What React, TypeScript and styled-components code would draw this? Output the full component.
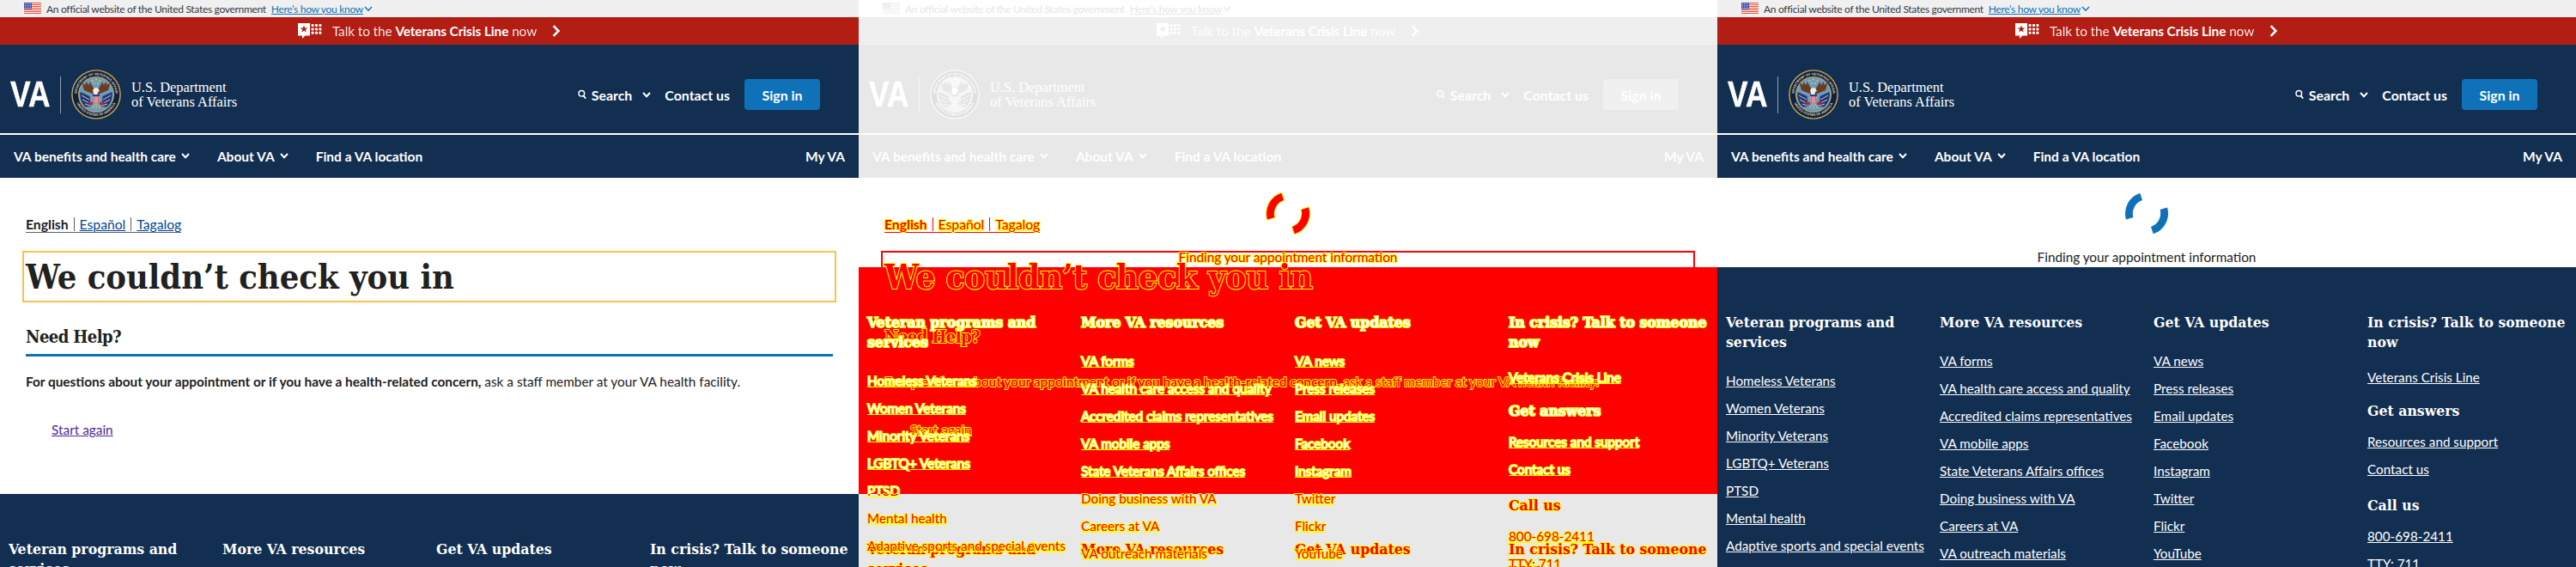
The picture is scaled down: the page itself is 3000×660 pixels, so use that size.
import React from "react";
import styled, { createGlobalStyle, css } from "styled-components";

const sans = `"Lato", "Open Sans", sans-serif`;
const slab = `"DejaVu Serif Condensed", "DejaVu Serif", serif`;

const GlobalStyle = createGlobalStyle`
  html, body { margin: 0; padding: 0; background: #fff; }
  #root { width: 3000px; height: 660px; overflow: hidden; }
  * { box-sizing: border-box; }
`;

const Page = styled.div`
  display: flex;
  width: 3000px;
  height: 660px;
  font-family: ${sans};
`;

const liveTone = css`
  --gov-bg: #f0f0f0;
  --gov-ink: #323a45;
  --gov-link: #0f72b9;
  --crisis-bg: #b21d14;
  --navy: #122f51;
  --button: #0f72b9;
  --art-filter: none;
  --ink: #212121;
  --link: #004795;
  --visited: #4c2c92;
  --rule: #0f72b9;
  --focus: #f9c24a;
  --lang-rule: #5b616b;
  --sep: #5b616b;
  --footer-bg: #122f51;
  --footer-ink: #fff;
  --spin: #0f72b9;
  --spin-edge: transparent;
`;

const diffTone = css`
  --gov-bg: #fff;
  --gov-ink: #e6e6e6;
  --gov-link: #e6e6e6;
  --crisis-bg: #efefef;
  --navy: #e8e8e8;
  --button: #f0f0f0;
  --art-filter: grayscale(1) contrast(0.1) brightness(1.9);
`;

const Panel = styled.section<{ $diff?: boolean }>`
  display: flex;
  flex-direction: column;
  width: 1000px;
  height: 660px;
  overflow: hidden;
  ${(p) => (p.$diff ? diffTone : liveTone)}
`;

/* gov banner */
const GovBanner = styled.div`
  display: flex;
  align-items: center;
  flex: none;
  height: 20px;
  padding-left: 28px;
  background: var(--gov-bg);
  color: var(--gov-ink);
  font-size: 12px;
  letter-spacing: -0.31px;
`;
const GovText = styled.span`
  margin-left: 6px;
`;
const GovLink = styled.a`
  margin: 0 1px 0 6px;
  color: var(--gov-link);
  text-decoration: underline;
`;

/* crisis line */
const CrisisBar = styled.div`
  display: flex;
  align-items: center;
  justify-content: center;
  flex: none;
  height: 32px;
  gap: 12px;
  background: var(--crisis-bg);
  color: #fff;
  font-size: 15.4px;
`;
const CrisisText = styled.span`
  margin-right: 6px;
  letter-spacing: -0.1px;
  b { font-weight: 700; }
  span { opacity: 0.88; }
`;

/* masthead */
const Masthead = styled.header`
  display: flex;
  align-items: center;
  flex: none;
  height: 103px;
  padding: 13px 45px 0 12px;
  background: var(--navy);
  color: #fff;
`;
const VaMark = styled.span`
  display: block;
  flex: none;
  width: 47px;
  font: 700 42px/1 "Liberation Sans", sans-serif;
  -webkit-text-stroke: 0.5px #fff;
  transform: scaleX(0.84);
  transform-origin: left center;
`;
const LogoRule = styled.span`
  width: 1px;
  height: 43px;
  margin: 0 12px 0 11px;
  background: rgba(255, 255, 255, 0.55);
`;
const SealWrap = styled.span`
  display: flex;
  filter: var(--art-filter);
`;
const DeptName = styled.div`
  margin-left: 12px;
  font: 400 16.4px/17.5px "Liberation Serif", serif;
`;
const Actions = styled.div`
  display: flex;
  align-items: center;
  margin-left: auto;
  font-size: 15.9px;
  font-weight: 700;
`;
const SearchLabel = styled.span`
  margin: 0 12px 0 6px;
`;
const ContactLabel = styled.span`
  margin: 0 17px 0 16px;
`;
const SignIn = styled.span`
  display: flex;
  align-items: center;
  justify-content: center;
  width: 88px;
  height: 36px;
  border-radius: 4px;
  background: var(--button);
`;
const HeaderLine = styled.div`
  flex: none;
  height: 1.5px;
  background: #fff;
`;

/* nav */
const Nav = styled.nav`
  display: flex;
  align-items: center;
  flex: none;
  height: 50.5px;
  padding: 0 16px;
  background: var(--navy);
  color: #fff;
  font-size: 15.5px;
  font-weight: 700;
`;
const NavItem = styled.span`
  display: flex;
  align-items: center;
  gap: 6px;
  margin-right: 32px;
`;
const MyVa = styled.span`
  margin-left: auto;
`;

/* page body */
const ErrorMain = styled.main`
  flex: none;
  height: 368px;
  padding: 44px 30px 0;
  color: var(--ink);
  font-size: 15.36px;
  line-height: 24px;
`;
const LangRow = styled.div`
  display: flex;
  align-items: center;
  width: fit-content;
  height: 20px;
  gap: 6px;
  border-bottom: 1px solid var(--lang-rule);
  font-size: 15.7px;
  line-height: 18px;
  b { font-weight: 700; }
`;
const LangSep = styled.span`
  width: 1px;
  height: 16px;
  background: var(--sep);
`;
const LangLink = styled.a`
  color: var(--link);
  text-decoration: underline;
`;
const Title = styled.h1`
  height: 60px;
  margin: 21px -4px 0;
  padding-left: 2px;
  border: 2px solid var(--focus);
  font: 700 39.5px/57px ${slab};
`;
const HelpTitle = styled.h2`
  margin: 28px 0 0;
  padding-bottom: 8px;
  border-bottom: 3px solid var(--rule);
  font: 700 20px/24px ${slab};
  letter-spacing: -0.56px;
`;
const HelpText = styled.p`
  margin: 17px 0 0;
  b { font-weight: 700; }
`;
const StartAgain = styled.a`
  display: block;
  margin: 32px 0 0 30px;
  color: var(--visited);
  text-decoration: underline;
`;

const LoadingMain = styled.main`
  display: flex;
  flex-direction: column;
  align-items: center;
  flex: none;
  height: 104px;
  padding-top: 16px;
  color: var(--ink);
  font-size: 15.3px;
  line-height: 24px;
`;
const LoadingText = styled.p`
  margin: 13px 0 0;
`;

/* footer */
const Footer = styled.footer`
  display: grid;
  grid-template-columns: repeat(4, 249px);
  flex: none;
  height: 349px;
  padding: 53px 0 0 10px;
  background: var(--footer-bg);
  color: var(--footer-ink);
`;
const ColTitle = styled.h3`
  width: 232px;
  margin: 0 0 21px;
  font: 700 17.5px/23px ${slab};
`;
const CrisisTitle = styled(ColTitle)`
  margin-bottom: 17px;
`;
const SubTitle = styled(ColTitle)<{ $top: number }>`
  margin: ${(p) => p.$top}px 0 12px;
`;
const LinkList = styled.ul`
  display: flex;
  flex-direction: column;
  gap: 8px;
  margin: 0;
  padding: 0;
  list-style: none;
  font-size: 15.25px;
  line-height: 24px;
`;
const FooterLink = styled.a`
  color: inherit;
  text-decoration: underline;
`;

/* diff panel overlay */
const DiffStage = styled.div`
  position: relative;
  flex: 1;
  min-height: 0;
  background: linear-gradient(#fff 104px, #f00 104px, #f00 368px, #e8e8e8 368px);
`;
const DiffInk = css`
  --ink: #f00;
  --link: #f00;
  --visited: #f00;
  --rule: #f00;
  --focus: #f00;
  --lang-rule: #f00;
  --sep: #f00;
  --footer-bg: transparent;
  --footer-ink: #f00;
  --spin: #f00;
  --spin-edge: #ff0;
  -webkit-text-stroke: 2px #ff0;
  paint-order: stroke fill;
`;
const BeforeLayer = styled.div`
  ${DiffInk}
  display: flex;
  flex-direction: column;
`;
const AfterLayer = styled.div`
  ${DiffInk}
  position: absolute;
  inset: 0;
  display: flex;
  flex-direction: column;
`;
const FooterWindow = styled.div<{ $height: number; $ink: string }>`
  flex: none;
  height: ${(p) => p.$height}px;
  overflow: hidden;
  --footer-ink: ${(p) => p.$ink};
`;
const FooterShift = styled.div`
  margin-top: -264px;
`;

/* drawings */
const Chevron = ({ color = "currentColor", sw = 2 }: { color?: string; sw?: number }) => (
  <svg width="10" height="7" viewBox="0 0 10 7" fill="none">
    <path d="M1 1l4 4.2L9 1" stroke={color} strokeWidth={sw} />
  </svg>
);

const Flag = () => (
  <svg width="20" height="14" viewBox="0 0 20 14">
    <rect width="20" height="14" fill="#fff" />
    {[0, 2, 4, 6, 8, 10, 12].map((y) => (
      <rect key={y} y={y} width="20" height="1.1" fill="#e2593f" />
    ))}
    <rect width="9" height="7.6" fill="#3e4ba8" />
    {[1.4, 3.8, 6.2].map((y) =>
      [1.4, 3.4, 5.4, 7.4].map((x) => <rect key={`${x}-${y}`} x={x - 0.5} y={y - 0.5} width="1" height="1" fill="#fff" />)
    )}
  </svg>
);

const CrisisIcon = () => (
  <svg width="28" height="18" viewBox="0 0 28 18">
    <path d="M0 0h14v14.4H8.4L5 18v-3.6H0z" fill="#fff" />
    <path
      d="M7 2.6l1.2 3h3.2l-2.6 1.9 1 3.1L7 8.8l-2.8 1.8 1-3.1-2.6-1.9h3.2z"
      fill="var(--crisis-bg)"
    />
    {[1, 5.4, 9.8].map((y) =>
      [15.6, 20, 24.4].map((x) => (
        <rect key={`${x}-${y}`} x={x} y={y} width="3" height="3" rx="0.8" fill="#fff" />
      ))
    )}
  </svg>
);

const SearchIcon = () => (
  <svg width="10" height="12" viewBox="0 0 10 12" fill="none">
    <circle cx="4.3" cy="4.8" r="3.3" stroke="currentColor" strokeWidth="1.5" />
    <path d="M6.6 7.6l2.6 3" stroke="currentColor" strokeWidth="1.8" />
  </svg>
);

const Seal = () => (
  <svg width="58" height="58" viewBox="0 0 58 58">
    <defs>
      <path id="sealTop" d="M6.5 29a22.5 22.5 0 0 1 45 0" />
      <path id="sealBottom" d="M4.2 29a24.8 24.8 0 0 0 49.6 0" />
    </defs>
    <circle cx="29" cy="29" r="28.8" fill="#cdaa52" />
    <circle cx="29" cy="29" r="27.4" fill="#10203f" />
    <text fontFamily="Liberation Sans, sans-serif" fontSize="3.9" fill="#d9d3b8" fontWeight="700">
      <textPath href="#sealTop" startOffset="50%" textAnchor="middle">
        DEPARTMENT OF VETERANS AFFAIRS
      </textPath>
    </text>
    <text fontFamily="Liberation Sans, sans-serif" fontSize="3.9" fill="#d9d3b8" fontWeight="700">
      <textPath href="#sealBottom" startOffset="50%" textAnchor="middle">
        UNITED STATES OF AMERICA
      </textPath>
    </text>
    <circle cx="29" cy="29" r="21" fill="#cdaa52" />
    <circle cx="29" cy="29" r="20" fill="#6c9bbd" />
    <path d="M10.5 26l11 5 1 12-6 .5a20 20 0 0 1-6-17.5z" fill="#23366f" />
    <path d="M47.5 26l-11 5-1 12 6 .5a20 20 0 0 0 6-17.5z" fill="#23366f" />
    <path d="M12 30l9 5M13 35l8 4M16 40l6 2M46 30l-9 5M45 35l-8 4M42 40l-6 2" stroke="#d8d8e4" strokeWidth="0.9" />
    {[[24.5, 13], [29, 11.5], [33.5, 13], [27, 16], [31, 16]].map(([x, y]) => (
      <circle key={`${x}-${y}`} cx={x} cy={y} r="1" fill="#e6c34f" />
    ))}
    <path d="M27 29L15 24l-2.5-9 4 3 .5-4 3.5 4 1-4 3 5 2 4z" fill="#6b3d1e" />
    <path d="M31 29l12-5 2.5-9-4 3-.5-4-3.5 4-1-4-3 5-2 4z" fill="#6b3d1e" />
    <path d="M25.2 25c0-2.8 2-3.8 3.8-3.8 2 0 3 1 3 2.8l1.6 1-2.6.7-1 3.3h-3.6z" fill="#f3efe6" />
    <path d="M25 29h8l-.8 8-3.2 2.6-3.2-2.6z" fill="#fff" />
    <path d="M26.2 30v7.4M28 30v9M30 30v9M31.8 30v7.4" stroke="#c8202c" strokeWidth="1" />
    <path d="M25 29h8v2.2h-8z" fill="#2b3f86" />
    <path d="M19 37l5.5 1 1 3-5.5-.5zM39 37l-5.5 1-1 3 5.5-.5z" fill="#b9242c" />
    <path d="M27 40l-2.4 5M31 40l2.4 5M29 40v6" stroke="#e6c34f" strokeWidth="0.9" />
  </svg>
);

const Spinner = () => (
  <svg width="52" height="52" viewBox="0 0 52 52" fill="none">
    <path
      d="M6.14 32.84A21 21 0 0 1 20.56 5.72M45.86 19.16A21 21 0 0 1 31.44 46.28"
      stroke="var(--spin-edge)"
      strokeWidth="11"
    />
    <path
      d="M5.81 31.79A21 21 0 0 1 19.51 6.03M46.19 20.21A21 21 0 0 1 32.49 45.97"
      stroke="var(--spin)"
      strokeWidth="9"
    />
  </svg>
);

/* page parts */
const Chrome = () => (
  <>
    <GovBanner>
      <SealWrap>
        <Flag />
      </SealWrap>
      <GovText>An official website of the United States government</GovText>
      <GovLink>Here’s how you know</GovLink>
      <Chevron color="var(--gov-link)" sw={1.4} />
    </GovBanner>
    <CrisisBar>
      <CrisisIcon />
      <CrisisText>
        <span>Talk to the </span>
        <b>Veterans Crisis Line</b>
        <span> now</span>
      </CrisisText>
      <svg width="10" height="14" viewBox="0 0 10 14" fill="none">
        <path d="M1.6 1.2L7.4 7l-5.8 5.8" stroke="#fff" strokeWidth="2.6" />
      </svg>
    </CrisisBar>
    <Masthead>
      <VaMark>VA</VaMark>
      <LogoRule />
      <SealWrap>
        <Seal />
      </SealWrap>
      <DeptName>
        U.S. Department
        <br />
        of Veterans Affairs
      </DeptName>
      <Actions>
        <SearchIcon />
        <SearchLabel>Search</SearchLabel>
        <Chevron />
        <ContactLabel>Contact us</ContactLabel>
        <SignIn>Sign in</SignIn>
      </Actions>
    </Masthead>
    <HeaderLine />
    <Nav>
      <NavItem>
        VA benefits and health care
        <Chevron />
      </NavItem>
      <NavItem>
        About VA
        <Chevron />
      </NavItem>
      <NavItem>Find a VA location</NavItem>
      <MyVa>My VA</MyVa>
    </Nav>
  </>
);

const ErrorContent = () => (
  <ErrorMain>
    <LangRow>
      <b>English</b>
      <LangSep />
      <LangLink>Español</LangLink>
      <LangSep />
      <LangLink>Tagalog</LangLink>
    </LangRow>
    <Title>We couldn’t check you in</Title>
    <HelpTitle>Need Help?</HelpTitle>
    <HelpText>
      <b>For questions about your appointment or if you have a health-related concern,</b> ask a staff member
      at your VA health facility.
    </HelpText>
    <StartAgain>Start again</StartAgain>
  </ErrorMain>
);

const LoadingContent = () => (
  <LoadingMain>
    <Spinner />
    <LoadingText>Finding your appointment information</LoadingText>
  </LoadingMain>
);

const footerCols = [
  {
    title: "Veteran programs and services",
    links: [
      "Homeless Veterans",
      "Women Veterans",
      "Minority Veterans",
      "LGBTQ+ Veterans",
      "PTSD",
      "Mental health",
      "Adaptive sports and special events",
    ],
  },
  {
    title: "More VA resources",
    links: [
      "VA forms",
      "VA health care access and quality",
      "Accredited claims representatives",
      "VA mobile apps",
      "State Veterans Affairs offices",
      "Doing business with VA",
      "Careers at VA",
      "VA outreach materials",
    ],
  },
  {
    title: "Get VA updates",
    links: ["VA news", "Press releases", "Email updates", "Facebook", "Instagram", "Twitter", "Flickr", "YouTube"],
  },
];

const Links = ({ items }: { items: string[] }) => (
  <LinkList>
    {items.map((item) => (
      <li key={item}>
        <FooterLink>{item}</FooterLink>
      </li>
    ))}
  </LinkList>
);

const SiteFooter = () => (
  <Footer>
    {footerCols.map((col) => (
      <div key={col.title}>
        <ColTitle>{col.title}</ColTitle>
        <Links items={col.links} />
      </div>
    ))}
    <div>
      <CrisisTitle>In crisis? Talk to someone now</CrisisTitle>
      <Links items={["Veterans Crisis Line"]} />
      <SubTitle $top={15.5}>Get answers</SubTitle>
      <Links items={["Resources and support", "Contact us"]} />
      <SubTitle $top={19.5}>Call us</SubTitle>
      <Links items={["800-698-2411", "TTY: 711"]} />
    </div>
  </Footer>
);

export default function App() {
  return (
    <Page>
      <GlobalStyle />
      <Panel>
        <Chrome />
        <ErrorContent />
        <SiteFooter />
      </Panel>
      <Panel $diff>
        <Chrome />
        <DiffStage>
          <BeforeLayer>
            <ErrorContent />
            <SiteFooter />
          </BeforeLayer>
          <AfterLayer>
            <LoadingContent />
            <FooterWindow $height={264} $ink="#fff">
              <SiteFooter />
            </FooterWindow>
            <FooterWindow $height={85} $ink="#f00">
              <FooterShift>
                <SiteFooter />
              </FooterShift>
            </FooterWindow>
          </AfterLayer>
        </DiffStage>
      </Panel>
      <Panel>
        <Chrome />
        <LoadingContent />
        <SiteFooter />
      </Panel>
    </Page>
  );
}
